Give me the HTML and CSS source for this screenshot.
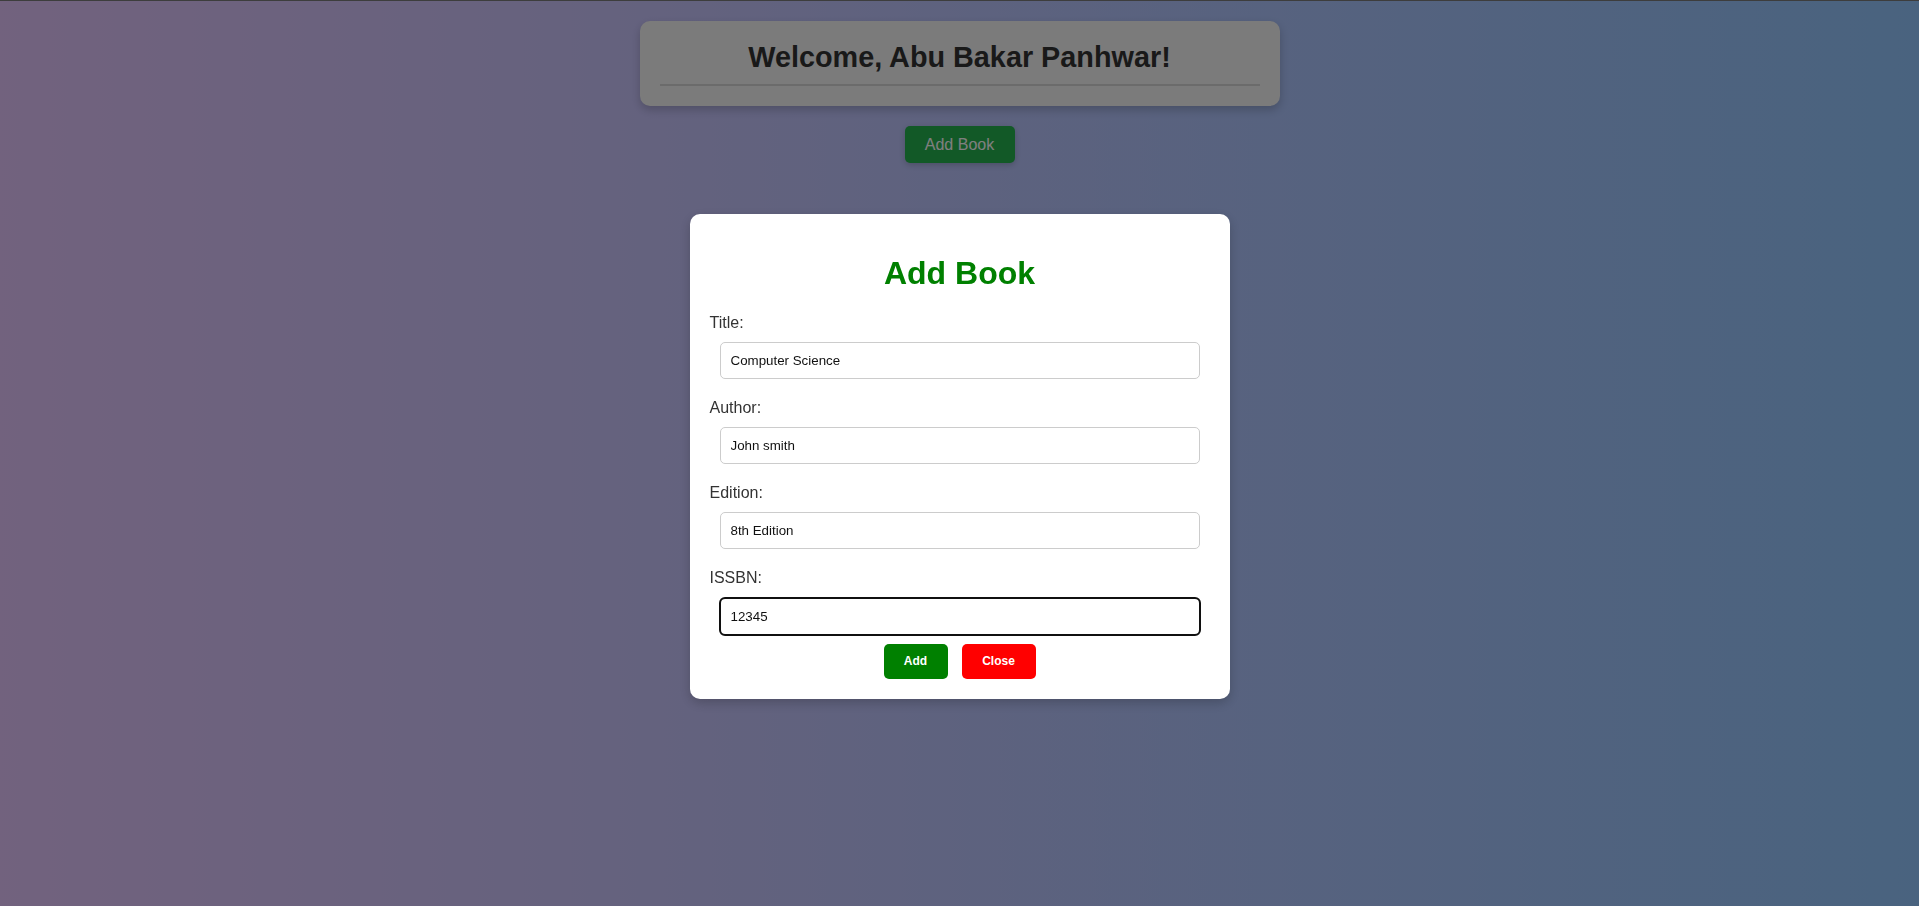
FILE: index.html
```html
<!DOCTYPE html>
<html lang="en">
<head>
<meta charset="utf-8">
<title>Library</title>
<link rel="stylesheet" href="styles.css">
</head>
<body>
<div class="page">
  <header class="welcome-card">
    <h1 class="welcome-title">Welcome, Abu Bakar Panhwar!</h1>
    <hr class="welcome-rule">
  </header>
  <div class="actions">
    <button class="btn-add-book" type="button">Add Book</button>
  </div>
</div>

<div class="overlay">
  <div class="modal">
    <h1 class="modal-title">Add Book</h1>
    <form class="book-form">
      <div class="field">
        <label class="field-label" for="title">Title:</label>
        <input class="field-input" id="title" type="text" value="Computer Science">
      </div>
      <div class="field">
        <label class="field-label" for="author">Author:</label>
        <input class="field-input" id="author" type="text" value="John smith">
      </div>
      <div class="field">
        <label class="field-label" for="edition">Edition:</label>
        <input class="field-input" id="edition" type="text" value="8th Edition">
      </div>
      <div class="field">
        <label class="field-label" for="issbn">ISSBN:</label>
        <input class="field-input field-input--focused" id="issbn" type="text" value="12345" autofocus>
      </div>
      <div class="form-buttons">
        <button class="btn btn-submit" type="button">Add</button>
        <button class="btn btn-close" type="button">Close</button>
      </div>
    </form>
  </div>
</div>
</body>
</html>
```

FILE: styles.css
```css
* {
  box-sizing: border-box;
}

html, body {
  height: 100%;
}

body {
  margin: 0;
  border-top: 1px solid #7a7a7a;
  font-family: "Liberation Sans", Arial, sans-serif;
  background: linear-gradient(to right, #e4c4fc, #93c6ff);
  min-height: 906px;
}

.page {
  padding-top: 20px;
  display: flex;
  flex-direction: column;
  align-items: center;
}

.welcome-card {
  width: 640px;
  padding: 20px;
  background: #f6f6f6;
  border-radius: 10px;
  box-shadow: 0 4px 10px rgba(0, 0, 0, 0.2);
}

.welcome-title {
  margin: 0;
  text-align: center;
  font-size: 28.8px;
  font-weight: bold;
  color: #333333;
}

.welcome-rule {
  margin: 10px 0 0;
  border: none;
  border-top: 2px solid #d6d6d6;
}

.actions {
  margin-top: 20px;
}

.btn-add-book {
  font-family: "Liberation Sans", Arial, sans-serif;
  font-size: 16px;
  line-height: 17px;
  padding: 10px 20px;
  width: 110px;
  border: none;
  border-radius: 5px;
  background: #25b24f;
  color: #ffffff;
  box-shadow: 0 2px 6px rgba(0, 0, 0, 0.2);
}

.overlay {
  position: fixed;
  inset: 0;
  background: rgba(0, 0, 0, 0.5);
  display: flex;
  justify-content: center;
  align-items: flex-start;
  padding-top: 214px;
}

.modal {
  width: 540px;
  padding: 20px;
  background: #ffffff;
  border-radius: 10px;
  box-shadow: 0 4px 12px rgba(0, 0, 0, 0.2);
}

.modal-title {
  margin: 21.44px 0;
  font-size: 32px;
  font-weight: bold;
  color: #008000;
  text-align: center;
}

.book-form {
  display: flex;
  flex-direction: column;
  gap: 19.7px;
}

.field {
  display: flex;
  flex-direction: column;
}

.field-label {
  font-size: 16px;
  line-height: 18.4px;
  color: #333333;
}

.field-input {
  display: block;
  margin: 10px 10px 0;
  width: calc(100% - 20px);
  height: 37px;
  padding: 10px;
  border: 1px solid #cccccc;
  border-radius: 5px;
  font-family: "Liberation Sans", Arial, sans-serif;
  font-size: 13.33px;
  color: #111111;
  background: #ffffff;
}

.field-input:focus,
.field-input--focused {
  outline: 2px solid #101010;
  outline-offset: -1px;
}

.form-buttons {
  margin-top: -10.7px;
  display: flex;
  justify-content: center;
  gap: 14px;
}

.btn {
  font-family: "Liberation Sans", Arial, sans-serif;
  font-size: 12px;
  font-weight: bold;
  line-height: 15px;
  padding: 10px 20px;
  border: none;
  border-radius: 5px;
  color: #ffffff;
}

.btn-submit {
  background: #008000;
  width: 64px;
}

.btn-close {
  background: #ff0000;
  width: 74px;
}
```
